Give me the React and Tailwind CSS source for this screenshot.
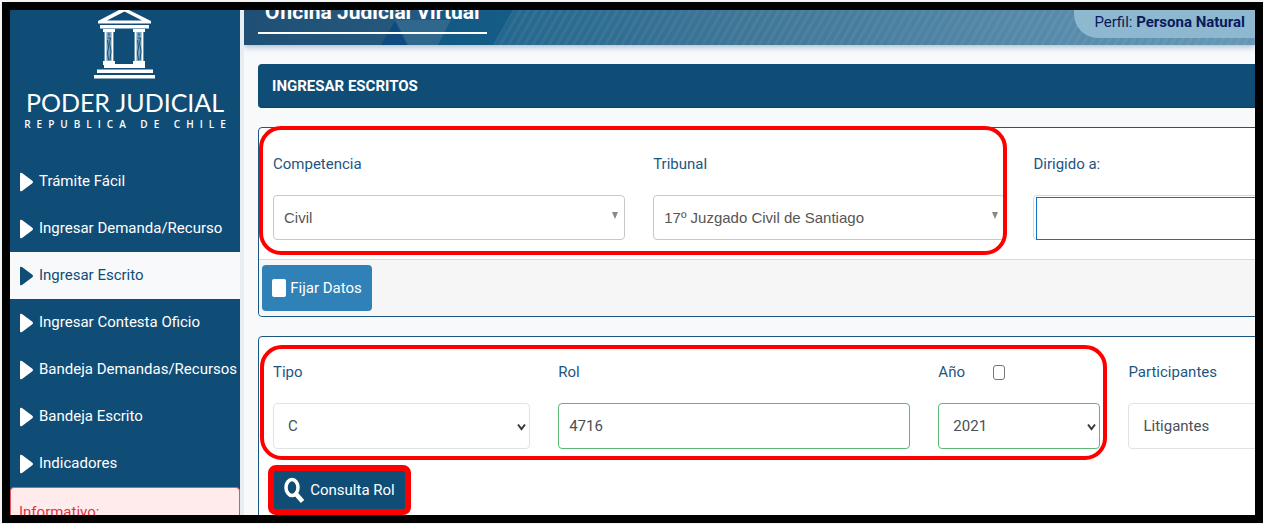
import React, { useState } from 'react';

const menuItems = [
    'Trámite Fácil',
    'Ingresar Demanda/Recurso',
    'Ingresar Escrito',
    'Ingresar Contesta Oficio',
    'Bandeja Demandas/Recursos',
    'Bandeja Escrito',
    'Indicadores',
];

const Column = ({ x }) => (
    <g transform={`translate(${x} 0)`}>
        <path d="M-1 19h12v3H-1z" fill="#fff" />
        <path d="M1 22h8v31H1z" fill="#7fa4bd" />
        <path d="M1.500 22v31M8.500 22v31" stroke="#fff" strokeWidth="1.800" />
        <path d="M5 23v3M3.500 28h3l-1 5 1.500 8-1 9M3.500 30l1 7-1 6 1 7" stroke="#0f4d77" strokeWidth="1" fill="none" />
        <path d="M-1 51h12v4H-1z" fill="#fff" />
    </g>
);

const Logo = () => (
    <div className="flex flex-col items-center text-white">
        <svg width="62" height="69" viewBox="0 0 62 69" aria-hidden="true">
            <path fillRule="evenodd" fill="#fff" d="M25 0h10l22 11v2.500H4V11zM30.500 1.500L13 10.500h35z" />
            <path d="M6 15h49v3.500H6z" fill="#fff" />
            <Column x={10} />
            <Column x={40} />
            <path d="M10 54h41v4H10zM3 59.500h56v3.500H3zM0 65h61v3.500H0z" fill="#fff" />
        </svg>
        <div className="mt-2 font-['Lato',sans-serif] text-[25px] leading-[30px] whitespace-nowrap">PODER JUDICIAL</div>
        <div className="pl-1.5 font-['Open_Sans',sans-serif] font-semibold text-[10px] leading-[14px] tracking-[6px] whitespace-nowrap">REPUBLICA DE CHILE</div>
    </div>
);

const Sidebar = ({ active, onSelect }) => (
    <aside className="w-[234px] shrink-0 bg-[#0f4d77] border-r-4 border-[#e8edf2] flex flex-col">
        <div className="h-[148px] shrink-0">
            <Logo />
        </div>
        <nav>
            {menuItems.map((item) => (
                <a
                    key={item}
                    href="#"
                    onClick={() => onSelect(item)}
                    className={`flex items-center gap-1.5 h-[47px] pl-2.5 text-[15px] whitespace-nowrap ${item === active ? 'bg-[#f8f9fb] text-[#0f4d77]' : 'text-white'}`}
                >
                    <svg className="shrink-0" width="13" height="20" viewBox="0 0 13 20" fill="currentColor" aria-hidden="true">
                        <path d="M0 2Q0 0 2 1L12 8.500Q14 10 12 11.500L2 19Q0 20 0 18z" />
                    </svg>
                    {item}
                </a>
            ))}
        </nav>
        <div className="h-20 shrink-0 px-2 pt-3 border border-[#e4545f] rounded bg-[#ffebeb] text-[#dc3545] text-[15px] leading-6">
            Informativo:
        </div>
    </aside>
);

const Header = () => (
    <header className="relative h-[35px] shrink-0 flex justify-between overflow-hidden shadow-[0_2px_6px_rgba(15,77,119,0.35)]">
        <svg className="absolute inset-0 w-full h-full" viewBox="0 0 1011 35" preserveAspectRatio="none" aria-hidden="true">
            <defs>
                <linearGradient id="sky" x1="0" x2="1">
                    <stop offset="0" stopColor="#1f4f74" />
                    <stop offset="0.16" stopColor="#26587e" />
                    <stop offset="0.2" stopColor="#125a85" />
                    <stop offset="0.26" stopColor="#155c86" />
                    <stop offset="0.5" stopColor="#316d90" />
                    <stop offset="1" stopColor="#5b90b1" />
                </linearGradient>
                <pattern id="stripes" width="7" height="7" patternUnits="userSpaceOnUse" patternTransform="rotate(30)">
                    <path d="M0 0h3v7H0z" fill="#fff" fillOpacity="0.05" />
                </pattern>
            </defs>
            <path d="M0 0h1011v35H0z" fill="url(#sky)" />
            <path d="M151 10h56l-13 25h-30z" fill="#2f678d" />
            <path d="M151 11l12 24h-26z" fill="#0f4a80" />
            <path d="M269 0h742v35H249z" fill="#fff" fillOpacity="0.07" />
            <path d="M269 0h742v35H249z" fill="url(#stripes)" />
        </svg>
        <h1 className="relative self-end ml-3.5 mb-[11px] px-[7px] pb-2 border-b-2 border-white text-white font-bold text-[21px] leading-6 whitespace-nowrap">
            Oficina Judicial Virtual
        </h1>
        <div className="relative h-7 pl-5 pr-2.5 rounded-bl-[24px] bg-[#8db8cf] text-[#0a1a5c] text-[15px] leading-6 whitespace-nowrap">
            Perfil: <b>Persona Natural</b>
        </div>
    </header>
);

const Highlight = ({ className }) => (
    <div className={`absolute border-4 border-[#ff0000] rounded-[22px] pointer-events-none ${className}`} />
);

const Field = ({ id, label, extra, className = '', children }) => (
    <div className={`px-3.5 ${className}`}>
        <div className="flex items-center gap-7 h-6 text-[#1d5681] text-[15px]">
            <label htmlFor={id}>{label}</label>
            {extra}
        </div>
        <div className="relative mt-[19px]">{children}</div>
    </div>
);

const Chevron = () => (
    <svg className="absolute right-1 top-5 pointer-events-none" width="9" height="8" viewBox="0 0 9 8" fill="none" stroke="#343a40" strokeWidth="2" aria-hidden="true">
        <path d="M1 1.500L4.500 6 8 1.500" />
    </svg>
);

const SearchSelect = ({ id, value }) => (
    <>
        <select id={id} className="block w-full h-[45px] px-2.5 pt-0.5 appearance-none border border-[#c8c8c8] rounded bg-white text-[#555] text-[15px] font-['Liberation_Sans',Arial,sans-serif]">
            <option>{value}</option>
        </select>
        <svg className="absolute right-[7px] top-[17px] pointer-events-none" width="6" height="7" viewBox="0 0 6 7" fill="#888" aria-hidden="true">
            <path d="M0 0h6L3 7z" />
        </svg>
    </>
);

const PlainSelect = ({ id, value, valid }) => (
    <>
        <select id={id} className={`block w-full h-[46px] px-3.5 appearance-none border rounded bg-white text-[#495057] text-[15px] ${valid ? 'border-[#5cb874]' : 'border-[#dfe3e7]'}`}>
            <option>{value}</option>
        </select>
        <Chevron />
    </>
);

const App = () => {
    const [active, setActive] = useState('Ingresar Escrito');
    const [rol, setRol] = useState('4716');

    return (
        <div className="h-screen pt-0.5 pl-0.5 pb-px bg-[#f1f3f4] font-['Roboto',sans-serif]">
            <div className="h-full border-8 border-black bg-[#f8f9fb] flex overflow-hidden">
                <Sidebar active={active} onSelect={setActive} />

                <main className="flex-1 min-w-0 overflow-hidden flex flex-col">
                    <Header />

                    {/* The form is wider than the window, its right side scrolls out of view */}
                    <div className="w-[115%] pl-3.5 pr-1.5 pt-[19px]">
                        <h2 className="h-11 px-3.5 pt-0.5 flex items-center rounded bg-[#0f4d77] border-b border-[#0b3f63] text-white text-[15px] font-bold">
                            INGRESAR ESCRITOS
                        </h2>

                        <section className="mt-[19px] border border-[#1d5681] rounded bg-white">
                            <div className="grid grid-cols-12">
                                <div className="relative col-span-8 grid grid-cols-2 pt-6 pb-[19px]">
                                    <Field id="competencia" label="Competencia">
                                        <SearchSelect id="competencia" value="Civil" />
                                    </Field>
                                    <Field id="tribunal" label="Tribunal">
                                        <SearchSelect id="tribunal" value="17º Juzgado Civil de Santiago" />
                                    </Field>
                                    <Highlight className="-top-0.5 left-0 right-3 bottom-1" />
                                </div>
                                <Field id="dirigido" label="Dirigido a:" className="col-span-4 pt-6">
                                    <div className="h-[45px] pt-px pl-0.5 border border-[#d5d5d5] rounded">
                                        <input id="dirigido" type="text" className="block w-full h-[43px] px-2 border border-[#1170c0] bg-white" />
                                    </div>
                                </Field>
                            </div>
                            <div className="p-[5px] pl-[3px] border-t border-[#d9d9d9] bg-[#f6f6f6] rounded-b">
                                <label className="w-[110px] h-[46px] flex items-center justify-center gap-1 rounded bg-[#3181b9] text-white text-[15px] whitespace-nowrap">
                                    <input type="checkbox" className="appearance-none w-3.5 h-[18px] rounded-xs bg-white" />
                                    Fijar Datos
                                </label>
                            </div>
                        </section>

                        <section className="mt-[19px] pb-6 border border-[#1d5681] rounded bg-white">
                            <div className="grid grid-cols-12">
                                <div className="relative col-span-9 grid grid-cols-9 pt-[23px] pb-4">
                                    <Field id="tipo" label="Tipo" className="col-span-3">
                                        <PlainSelect id="tipo" value="C" />
                                    </Field>
                                    <Field id="rol" label="Rol" className="col-span-4">
                                        <input
                                            id="rol"
                                            type="text"
                                            value={rol}
                                            onChange={(e) => setRol(e.target.value)}
                                            className="block w-full h-[46px] px-2.5 border border-[#5cb874] rounded bg-white text-[#495057] text-[15px]"
                                        />
                                    </Field>
                                    <Field
                                        id="anio"
                                        label="Año"
                                        className="col-span-2"
                                        extra={<input type="checkbox" aria-label="Año" className="appearance-none w-3 h-[15px] border border-[#767676] rounded-[3px] bg-white" />}
                                    >
                                        <PlainSelect id="anio" value="2021" valid />
                                    </Field>
                                    <Highlight className="top-2 left-px right-[7px] bottom-[5px]" />
                                </div>
                                <Field id="participantes" label="Participantes" className="col-span-3 pt-[23px]">
                                    <PlainSelect id="participantes" value="Litigantes" />
                                </Field>
                            </div>
                            <button
                                type="button"
                                className="ml-[9px] w-[143px] h-[50px] flex items-center justify-center gap-1.5 border-6 border-[#ff0000] rounded-lg bg-[#0f4d77] text-white text-[15px] whitespace-nowrap"
                            >
                                <svg width="20" height="26" viewBox="0 0 20 26" fill="none" stroke="#fff" aria-hidden="true">
                                    <ellipse cx="8" cy="10.500" rx="6" ry="8" strokeWidth="3.500" />
                                    <path d="M12 17l6.500 7.500" strokeWidth="4.500" />
                                </svg>
                                Consulta Rol
                            </button>
                        </section>
                    </div>
                </main>
            </div>
        </div>
    );
};

export default App;
